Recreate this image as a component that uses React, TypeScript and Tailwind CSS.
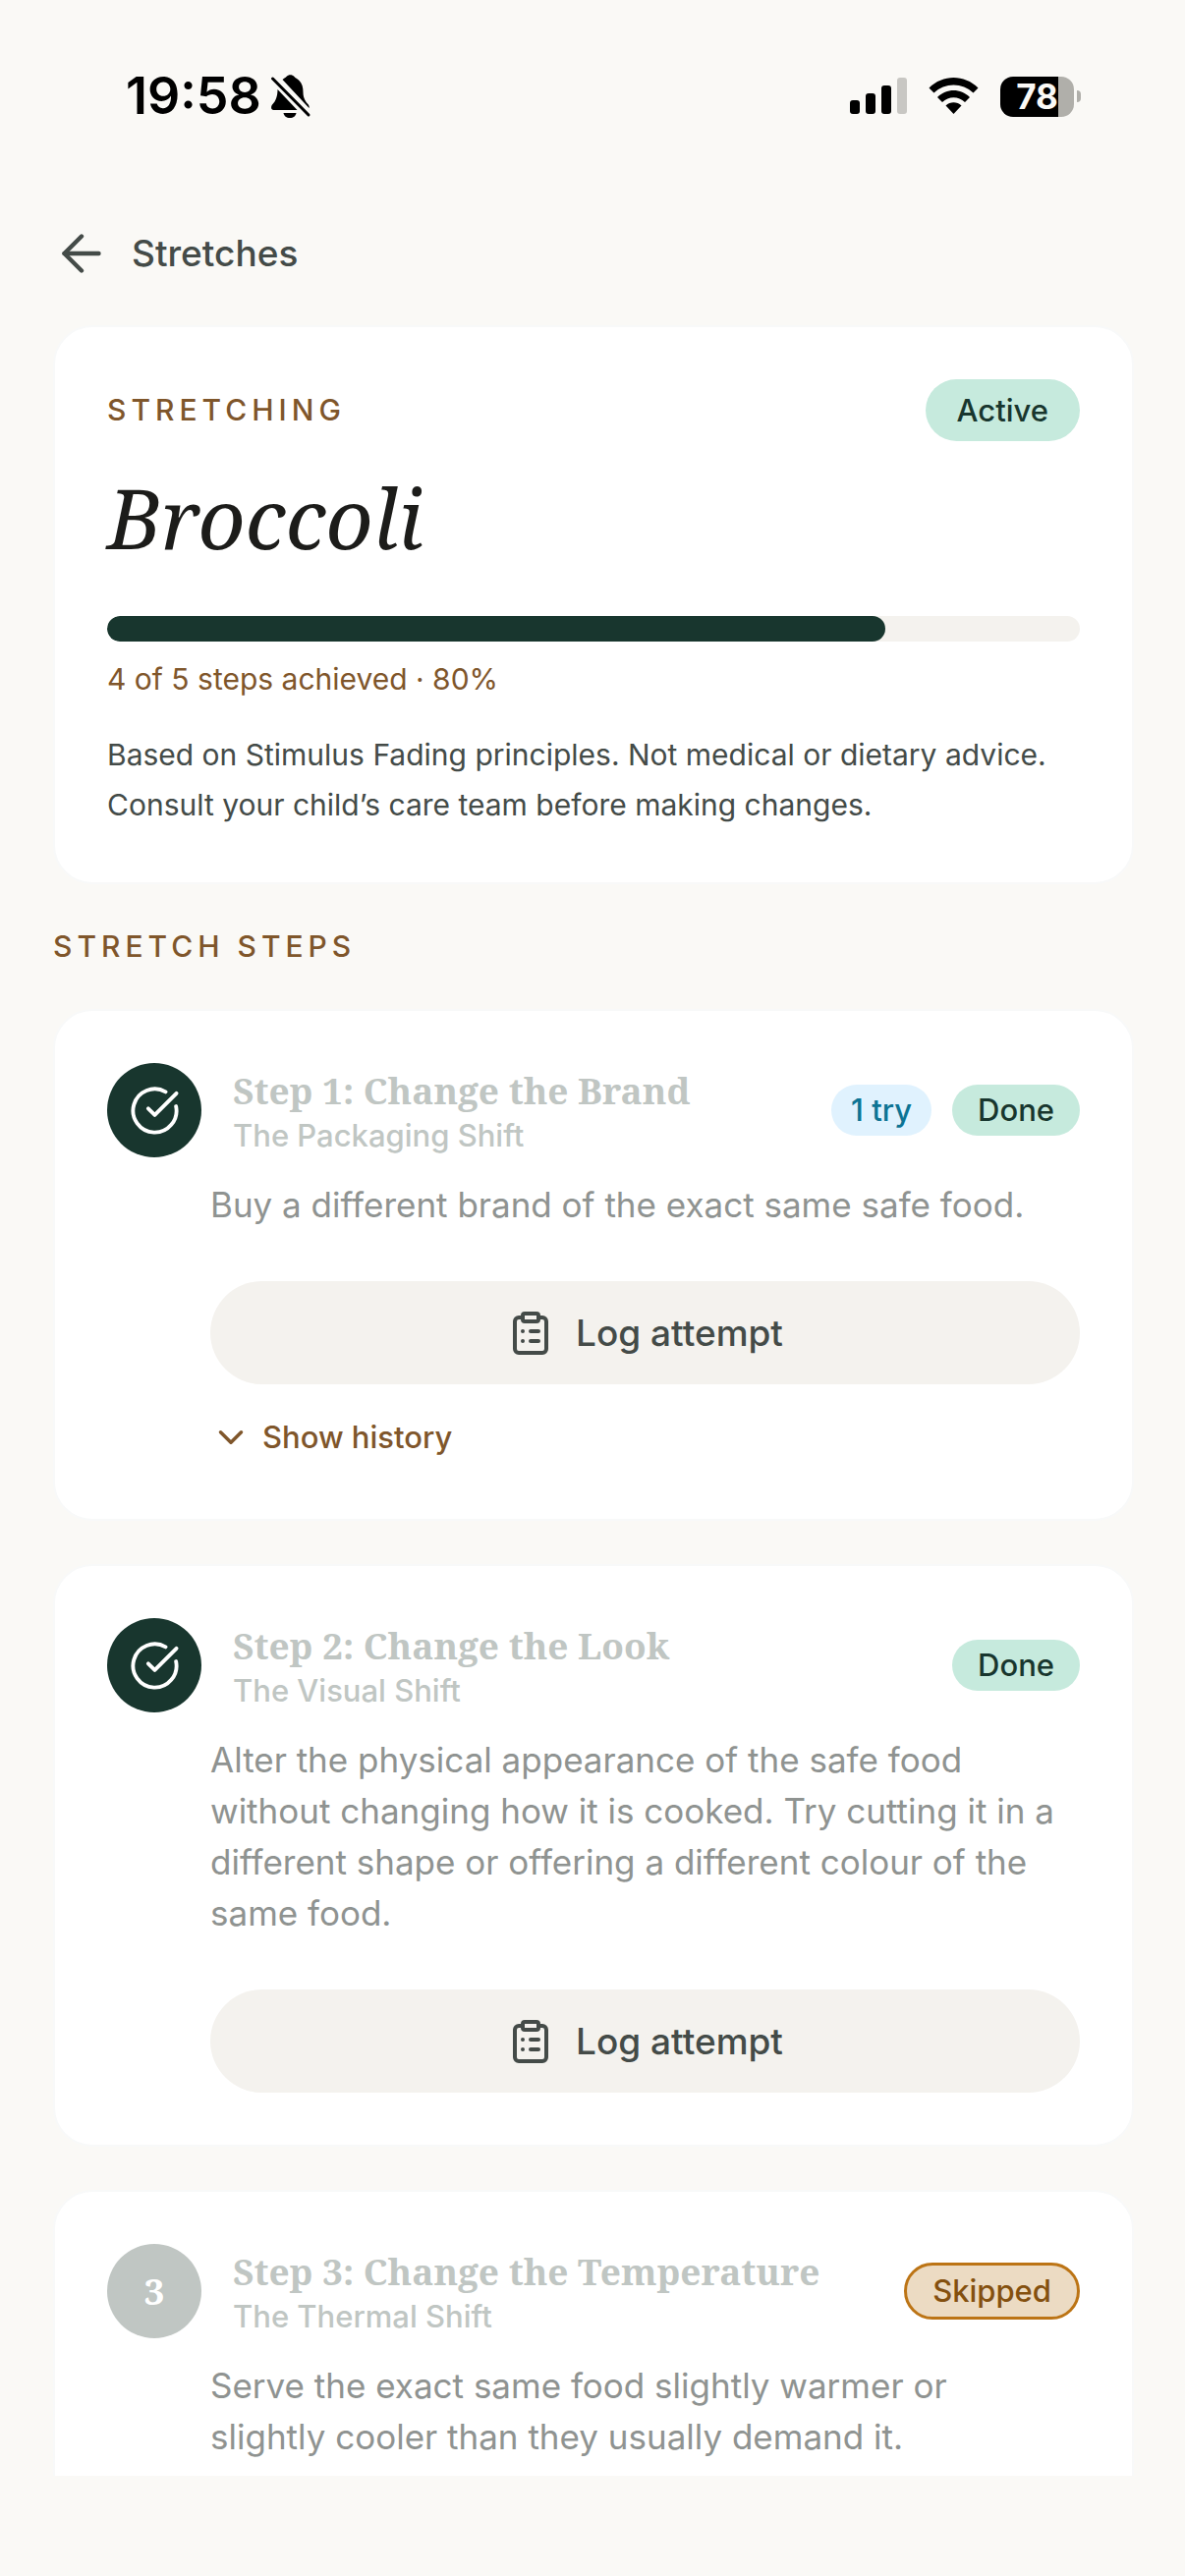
import { ArrowLeft, ChevronDown, CircleCheckBig, ClipboardList } from "lucide-react";

interface Step {
  id: number;
  title: string;
  shift: string;
  description: string;
  status: "done" | "skipped";
  tries?: string;
}

const steps: Step[] = [
  {
    id: 1,
    title: "Change the Brand",
    shift: "The Packaging Shift",
    description: "Buy a different brand of the exact same safe food.",
    status: "done",
    tries: "1 try",
  },
  {
    id: 2,
    title: "Change the Look",
    shift: "The Visual Shift",
    description:
      "Alter the physical appearance of the safe food without changing how it is cooked. Try cutting it in a different shape or offering a different colour of the same food.",
    status: "done",
  },
  {
    id: 3,
    title: "Change the Temperature",
    shift: "The Thermal Shift",
    description: "Serve the exact same food slightly warmer or slightly cooler than they usually demand it.",
    status: "skipped",
  },
];

const achieved = 4;
const total = 5;
const percent = (achieved / total) * 100;

function StatusBar() {
  return (
    <div className="flex h-[60px] shrink-0 items-center justify-between pr-[106px] pl-[128px] text-black">
      <div className="flex items-center gap-2">
        <span className="text-[52px] leading-[60px] font-semibold">19:58</span>
        {/* Muted bell */}
        <svg width="43" height="44" viewBox="0 0 40 44" fill="currentColor" aria-label="Silent mode">
          <path d="M12 5 C14 3.5 15 3 16 2 C18 -0.5 22 -0.5 24 2 C25 3.5 27 4 29 6 C32 9 33 13 33 18 C33 24 36 28 38 30 C39 31.5 39.5 33 39 34 Z" />
          <path d="M7 15 L27 36 H3 C0 36 0 32 2 30 C5 27 7 22 7 15 Z" />
          <path d="M13 39 H26 C25.500 42 23 44 19.500 44 C16 44 13.500 42 13 39 Z" />
          <path d="M2 4 L38.500 41" stroke="currentColor" strokeWidth="3" strokeLinecap="round" />
        </svg>
      </div>
      <div className="flex items-center gap-[22px]">
        <svg width="58" height="38" viewBox="0 0 58 38" fill="currentColor" aria-label="Signal">
          <rect x="0" y="23" width="10" height="14" rx="3" />
          <rect x="16" y="16" width="10" height="21" rx="3" />
          <rect x="32" y="8" width="10" height="29" rx="3" />
          <rect x="48" y="0" width="10" height="37" rx="3" fill="#c8c7c3" />
        </svg>
        <svg width="51" height="38" viewBox="0 0 51 38" fill="currentColor" aria-label="Wi-Fi">
          <path d="M0.500 10.500 C14.500 -3.500 36.500 -3.500 50.500 10.500 L45.500 15.500 C34.500 4.800 16.500 4.800 5.500 15.500 Z" />
          <path d="M9 20 C18.500 10.700 32.500 10.700 42 20 L37 25 C30.500 18.500 20.500 18.500 14 25 Z" />
          <path d="M17.500 28.500 C22 24.300 29 24.300 33.500 28.500 L25.500 37 Z" />
        </svg>
        <div className="flex items-center gap-[3px]">
          <div className="flex h-[41px] w-[75px] items-center justify-center rounded-[13px] bg-[linear-gradient(to_right,#000_59px,#b0afaa_59px)] text-[35px] leading-[41px] font-bold text-[#faf9f6]">
            78
          </div>
          <div className="h-3 w-1 rounded-r-full bg-[#b0afaa]" />
        </div>
      </div>
    </div>
  );
}

function StepBadge({ status }: { status: Step["status"] }) {
  if (status === "skipped") {
    return (
      <span className="rounded-full border-3 border-[#bc7415] bg-[#ecdbc3] px-[26px] text-[31px] leading-[52px] font-medium text-[#84500f]">
        Skipped
      </span>
    );
  }
  return (
    <span className="rounded-full bg-[#c6eadd] px-[26px] text-[31px] leading-[52px] font-medium text-[#18362e]">
      Done
    </span>
  );
}

function StepCard({ step }: { step: Step }) {
  const done = step.status === "done";

  return (
    <li className="rounded-[40px] border-2 border-[#f8f9f9] bg-white p-[53px]">
      <div className="flex items-center gap-8">
        {done ? (
          <div className="flex size-24 shrink-0 items-center justify-center rounded-full bg-[#18362e] text-white">
            <CircleCheckBig size={53} strokeWidth={1.75} />
          </div>
        ) : (
          <div className="flex size-24 shrink-0 items-center justify-center rounded-full bg-[#c0c6c3] font-['Noto_Serif',serif] text-[37px] font-bold text-white">
            {step.id}
          </div>
        )}
        <div className="flex-1 pt-1 text-[#c0c6c3]">
          <h3 className="font-['Noto_Serif',serif] text-[37px] leading-[48px] font-bold">
            Step {step.id}: {step.title}
          </h3>
          <p className="text-[31px] leading-[44px] font-medium">{step.shift}</p>
        </div>
        <div className="flex items-center gap-[21px]">
          {step.tries && (
            <span className="rounded-full bg-[#e0f2fe] px-5 text-[31px] leading-[52px] font-medium text-[#0d7494]">
              {step.tries}
            </span>
          )}
          <StepBadge status={step.status} />
        </div>
      </div>

      <div className="pt-[22px] pl-[105px]">
        <p className="pr-4 text-[35px] leading-[52px] text-[#8f9391]">{step.description}</p>
        {done && (
          <button
            type="button"
            className="mt-[52px] flex h-[105px] w-full items-center justify-center gap-[22px] rounded-full bg-[#f4f2ee] text-[37px] font-medium text-[#444b48]"
          >
            <ClipboardList size={48} />
            Log attempt
          </button>
        )}
        {step.tries && (
          <button
            type="button"
            className="mt-6 flex h-[60px] items-center gap-[11px] text-[31px] font-medium text-[#7f562b]"
          >
            <ChevronDown size={42} />
            Show history
          </button>
        )}
      </div>
    </li>
  );
}

export default function App() {
  return (
    <div className="flex h-screen flex-col bg-[#faf9f6] pt-17 pb-[102px] font-['Inter',sans-serif]">
      <StatusBar />

      <header className="mt-[100px] flex shrink-0 px-[53px]">
        <a
          href="#stretches"
          className="flex h-[60px] items-center gap-[21px] text-[37px] font-medium text-[#444b48]"
        >
          <ArrowLeft size={60} strokeWidth={1.75} />
          Stretches
        </a>
      </header>

      <main className="mt-[43px] flex min-h-0 flex-1 flex-col gap-11 overflow-y-auto pr-[52px] pl-[54px] [scrollbar-width:none]">
        <section className="shrink-0 rounded-[40px] border-2 border-[#f8f9f9] bg-white p-[53px]">
          <div className="flex items-center justify-between">
            <p className="text-[30px] font-medium tracking-[5px] text-[#7f562b] uppercase">Stretching</p>
            <span className="rounded-full bg-[#c6eadd] px-8 text-[31px] leading-[63px] font-medium text-[#18362e]">
              Active
            </span>
          </div>
          <h1 className="mt-[22px] font-['Noto_Serif',serif] text-[84px] leading-[112px] text-[#1c1c1a] italic">
            Broccoli
          </h1>
          <div
            role="progressbar"
            aria-valuenow={percent}
            aria-valuemin={0}
            aria-valuemax={100}
            aria-label="Steps achieved"
            className="mt-11 h-[26px] overflow-hidden rounded-full bg-[#f4f2ee]"
          >
            <div className="h-full rounded-full bg-[#18362e]" style={{ width: `${percent}%` }} />
          </div>
          <p className="mt-[18px] text-[30px] leading-[40px] text-[#7f562b]">
            {achieved} of {total} steps achieved · {percent}%
          </p>
          <p className="mt-8 text-[30px] leading-[51px] text-[#444b48]">
            Based on Stimulus Fading principles. Not medical or dietary advice. Consult your child’s care team before
            making changes.
          </p>
        </section>

        <h2 className="text-[30px] leading-[39px] font-medium tracking-[5px] text-[#7f562b] uppercase">
          Stretch steps
        </h2>

        <ul className="flex flex-col gap-11">
          {steps.map((step) => (
            <StepCard key={step.id} step={step} />
          ))}
        </ul>
      </main>
    </div>
  );
}
